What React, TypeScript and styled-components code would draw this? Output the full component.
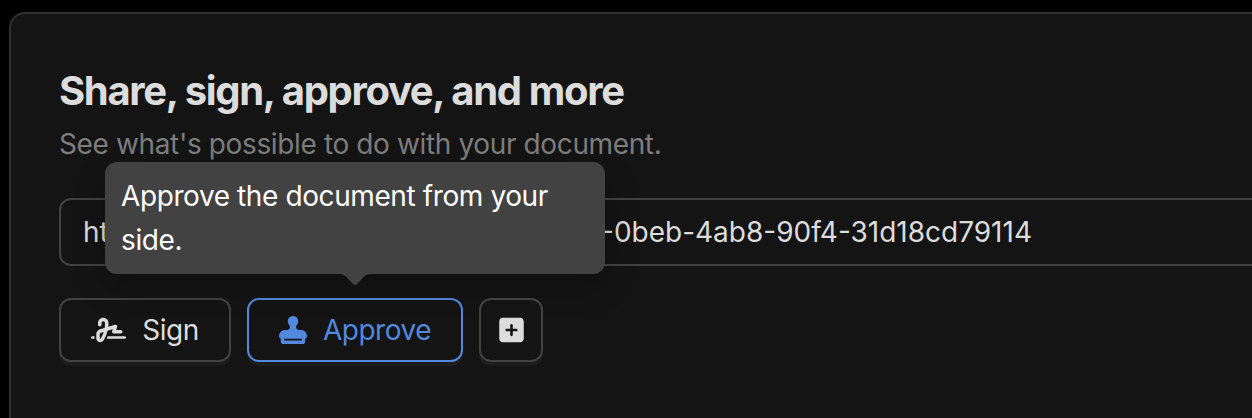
import React from "react";
import styled, { createGlobalStyle } from "styled-components";
import { FaSignature, FaSquarePlus, FaStamp } from "react-icons/fa6";

const Global = createGlobalStyle`
  * { box-sizing: border-box; }
  body {
    margin: 0;
    background: #000;
    overflow: hidden;
    font-family: Inter, "Liberation Sans", sans-serif;
  }
`;

const Page = styled.main`
  height: 418px;
  padding: 12px 0 0 9px;
  overflow: hidden;
`;

const Card = styled.section`
  width: 1340px;
  height: 520px;
  padding: 48px;
  border: 2px solid #303030;
  border-radius: 16px;
  background: #141414;
`;

const Title = styled.h1`
  margin: 4px 0 0;
  color: #dcdcdc;
  font-size: 40px;
  font-weight: 700;
  line-height: 50px;
  letter-spacing: -1.33px;
  white-space: nowrap;
`;

const Subtitle = styled.p`
  margin: 6px 0 0;
  color: #7d7d7d;
  font-size: 28px;
  line-height: 44px;
  letter-spacing: -0.37px;
  white-space: nowrap;
`;

const LinkField = styled.div`
  display: flex;
  align-items: center;
  height: 68px;
  margin-top: 32px;
  padding: 0 22px;
  border: 2px solid #424242;
  border-radius: 12px;
  color: #dcdcdc;
  font-size: 28px;
  white-space: nowrap;
`;

const LinkHost = styled.span`
  width: 518px;
`;

const LinkId = styled.span``;

const Actions = styled.div`
  display: flex;
  gap: 16px;
  margin-top: 32px;
`;

const Button = styled.button<{ $active?: boolean; $width: number }>`
  position: relative;
  display: flex;
  align-items: center;
  justify-content: center;
  gap: 16px;
  width: ${(p) => p.$width}px;
  height: 64px;
  padding: 0;
  border: 2px solid ${(p) => (p.$active ? "#5288dd" : "#424242")};
  border-radius: 12px;
  background: #141414;
  box-shadow: 0 4px 0 #1d1d1d;
  color: ${(p) => (p.$active ? "#5288dd" : "#dcdcdc")};
  font-family: inherit;
  font-size: 28px;
  letter-spacing: -0.5px;
`;

const SignIcon = styled(FaSignature)`
  flex: none;
  width: 35px;
  height: 28px;
`;

const StampIcon = styled(FaStamp)`
  flex: none;
  width: 28px;
  height: 28px;
`;

const PlusIcon = styled(FaSquarePlus)`
  flex: none;
  width: 25px;
  height: 28px;
`;

const Tooltip = styled.div`
  position: absolute;
  left: 50%;
  bottom: 86px;
  width: 500px;
  height: 112px;
  padding: 12px 16px;
  transform: translateX(-50%);
  border-radius: 12px;
  background: #424242;
  box-shadow: 0 12px 32px rgba(0, 0, 0, 0.24);
  color: #fff;
  font-size: 28px;
  line-height: 44px;
  letter-spacing: -0.4px;
  text-align: left;
`;

const Arrow = styled.svg`
  position: absolute;
  top: 112px;
  left: 234px;
`;

export default function App() {
  return (
    <Page>
      <Global />
      <Card>
        <Title>Share, sign, approve, and more</Title>
        <Subtitle>See what's possible to do with your document.</Subtitle>
        <LinkField>
          <LinkHost>ht</LinkHost>
          <LinkId>-0beb-4ab8-90f4-31d18cd79114</LinkId>
        </LinkField>
        <Actions>
          <Button $width={172}>
            <SignIcon />
            Sign
          </Button>
          <Button $width={216} $active>
            <StampIcon />
            Approve
            <Tooltip role="tooltip">
              Approve the document from your side.
              <Arrow width="32" height="12" viewBox="0 0 32 12">
                <path d="M0 0C3 0 5 .8 7 2.8L13.7 9.8Q16 12.2 18.3 9.8L25 2.8C27 .8 29 0 32 0Z" fill="#424242" />
              </Arrow>
            </Tooltip>
          </Button>
          <Button $width={64} aria-label="Add action">
            <PlusIcon />
          </Button>
        </Actions>
      </Card>
    </Page>
  );
}
